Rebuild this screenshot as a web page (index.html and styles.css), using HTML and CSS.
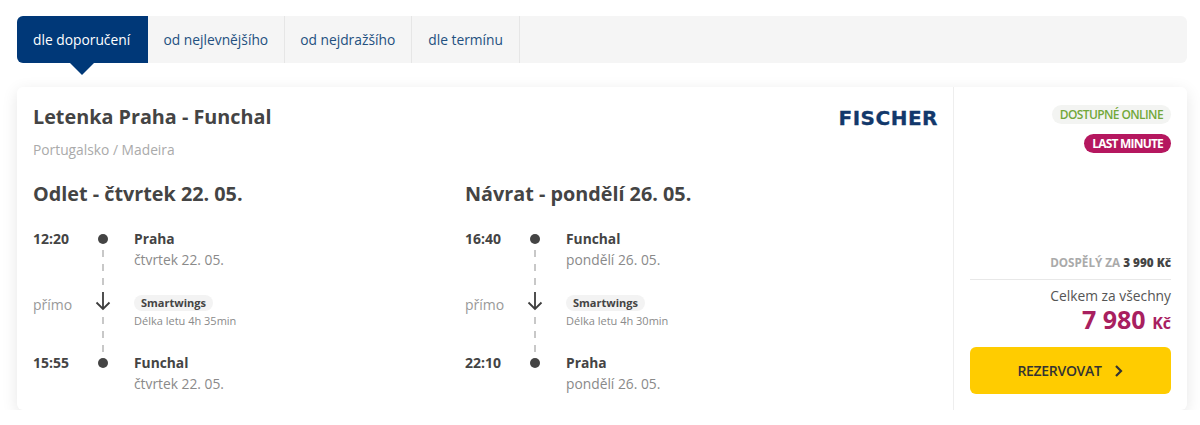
FILE: index.html

```html
<!DOCTYPE html>
<html lang="cs">
<head>
<meta charset="UTF-8">
<title>Letenka Praha - Funchal</title>
<link rel="stylesheet" href="styles.css">
</head>
<body>
<div class="tabs">
    <a class="tab active">dle doporučení</a>
    <a class="tab">od nejlevnějšího</a>
    <a class="tab">od nejdražšího</a>
    <a class="tab">dle termínu</a>
</div>

<div class="offer">
    <div class="offer-main">
        <div class="offer-head">
            <div>
                <h2 class="offer-title">Letenka Praha - Funchal</h2>
                <div class="offer-place">Portugalsko / Madeira</div>
            </div>
            <div class="logo">FISCHER</div>
        </div>
        <div class="legs">
            <div class="leg">
                <h3 class="leg-title">Odlet - čtvrtek 22. 05.</h3>
                <div class="route">
                    <div class="rail">
                        <span class="dot"></span>
                        <span class="dash"></span>
                        <svg class="arrow" viewBox="0 0 16 20" width="16" height="20"><path d="M8 1v17M1.500 11.500L8 18l6.500-6.500" fill="none" stroke="#3d3d3d" stroke-width="1.800"/></svg>
                        <span class="dash"></span>
                        <span class="dot"></span>
                    </div>
                    <div class="time">12:20</div>
                    <div class="stop"><b>Praha</b><span>čtvrtek 22. 05.</span></div>
                    <div class="direct">přímo</div>
                    <div class="flight"><span class="carrier">Smartwings</span><small>Délka letu 4h 35min</small></div>
                    <div class="time">15:55</div>
                    <div class="stop"><b>Funchal</b><span>čtvrtek 22. 05.</span></div>
                </div>
            </div>
            <div class="leg">
                <h3 class="leg-title">Návrat - pondělí 26. 05.</h3>
                <div class="route">
                    <div class="rail">
                        <span class="dot"></span>
                        <span class="dash"></span>
                        <svg class="arrow" viewBox="0 0 16 20" width="16" height="20"><path d="M8 1v17M1.500 11.500L8 18l6.500-6.500" fill="none" stroke="#3d3d3d" stroke-width="1.800"/></svg>
                        <span class="dash"></span>
                        <span class="dot"></span>
                    </div>
                    <div class="time">16:40</div>
                    <div class="stop"><b>Funchal</b><span>pondělí 26. 05.</span></div>
                    <div class="direct">přímo</div>
                    <div class="flight"><span class="carrier">Smartwings</span><small>Délka letu 4h 30min</small></div>
                    <div class="time">22:10</div>
                    <div class="stop"><b>Praha</b><span>pondělí 26. 05.</span></div>
                </div>
            </div>
        </div>
    </div>

    <div class="offer-side">
        <div class="badges">
            <span class="badge badge-online">DOSTUPNÉ ONLINE</span>
            <span class="badge badge-minute">LAST MINUTE</span>
        </div>
        <div class="price-box">
            <div class="per-person">DOSPĚLÝ ZA <b>3 990 Kč</b></div>
            <div class="total-label">Celkem za všechny</div>
            <div class="total">7 980 <small>Kč</small></div>
            <a class="btn-book">REZERVOVAT
                <svg viewBox="0 0 10 14" width="10" height="14"><path d="M2 2l5 5-5 5" fill="none" stroke="#333" stroke-width="2.200"/></svg>
            </a>
        </div>
    </div>
</div>
</body>
</html>
```

FILE: styles.css

```css
body {
    font-family: "Open Sans", Arial, sans-serif;
    background-color: #fff;
    color: #444;
    margin: 0;
    padding: 16px 13px 0 17px;
}
.tabs {
    display: flex;
    height: 47px;
    background-color: #f5f5f5;
    border-radius: 6px;
}
.tab {
    position: relative;
    display: flex;
    align-items: center;
    padding: 0 15.500px;
    font-size: 13.800px;
    color: #23507f;
    border-right: 1px solid #e6e6e6;
}
.tab:last-child {
    padding: 0 16.500px;
}
.tab.active {
    width: 99px;
    padding: 0 16px;
    background-color: #003878;
    color: #fff;
    border-right: none;
    border-radius: 6px 0 0 6px;
}
.tab.active::after {
    content: "";
    position: absolute;
    left: 53px;
    top: 100%;
    border-left: 12px solid transparent;
    border-right: 12px solid transparent;
    border-top: 12px solid #003878;
}
.offer {
    display: flex;
    height: 323px;
    margin-top: 24px;
    background-color: #fff;
    border-radius: 6px;
    box-shadow: 0 4px 16px rgba(0, 0, 0, 0.1);
}
.offer-main {
    flex: 1;
    padding: 16px 15px 0 16px;
}
.offer-head {
    display: flex;
    justify-content: space-between;
}
.offer-title {
    margin: 0;
    font-size: 19.800px;
    line-height: 28px;
    font-weight: 700;
}
.offer-place {
    margin-top: 9px;
    font-size: 13.800px;
    line-height: 20px;
    color: #aaa;
}
.logo {
    margin-top: 1px;
    font-family: "DejaVu Sans", Arial, sans-serif;
    font-size: 20px;
    line-height: 28px;
    font-weight: 700;
    color: #12386b;
    letter-spacing: 0.500px;
    -webkit-text-stroke: 0.300px #12386b;
}
.legs {
    display: flex;
    margin-top: 20px;
}
.leg {
    width: 432px;
}
.leg-title {
    margin: 0;
    font-size: 19.800px;
    line-height: 28px;
    font-weight: 700;
}
.route {
    display: grid;
    grid-template-columns: 57px 25px 1fr;
    grid-template-rows: 64px 60px 60px;
    margin-top: 21px;
    height: 184px;
}
.rail {
    grid-column: 2;
    grid-row: 1 / 4;
    display: flex;
    flex-direction: column;
    align-items: center;
    height: 134px;
    margin-top: 5px;
}
.dot {
    width: 10px;
    height: 10px;
    flex: none;
    border-radius: 50%;
    background-color: #444;
}
.dash {
    flex: 1;
    width: 2px;
    margin: 6px 0;
    background-image: repeating-linear-gradient(to bottom, #c8c8c8 0, #c8c8c8 7px, transparent 7px, transparent 14px);
}
.arrow {
    flex: none;
}
.time {
    grid-column: 1;
    font-size: 14px;
    line-height: 20px;
    font-weight: 700;
}
.stop, .flight {
    grid-column: 3;
    padding-left: 19px;
    display: flex;
    flex-direction: column;
    align-items: flex-start;
}
.stop b {
    font-size: 13.800px;
    line-height: 20px;
    font-weight: 700;
}
.stop span {
    font-size: 13.800px;
    line-height: 21px;
    color: #8a8a8a;
}
.direct {
    grid-column: 1;
    font-size: 14px;
    line-height: 20px;
    color: #999;
    padding-top: 2px;
}
.flight {
    padding-top: 2px;
}
.carrier {
    background-color: #f3f3f3;
    border-radius: 9px;
    padding: 0 7px;
    font-size: 11px;
    line-height: 16px;
    font-weight: 700;
}
.flight small {
    margin-top: 2px;
    font-size: 11px;
    line-height: 16px;
    color: #8a8a8a;
}
.offer-side {
    width: 201px;
    padding: 18px 16px 16px 16px;
    border-left: 1px solid #eee;
    display: flex;
    flex-direction: column;
    justify-content: space-between;
}
.badges {
    display: flex;
    flex-direction: column;
    align-items: flex-end;
    gap: 10px;
}
.badge {
    padding: 0 8px;
    border-radius: 10px;
    font-size: 12px;
    line-height: 19px;
    font-weight: 600;
    letter-spacing: -0.600px;
}
.badge-online {
    background-color: #f3f4f2;
    color: #72a83a;
}
.badge-minute {
    background-color: #b5175f;
    color: #fff;
    font-weight: 700;
    letter-spacing: -0.800px;
}
.per-person {
    padding-bottom: 9px;
    border-bottom: 1px solid #e8e8e8;
    text-align: right;
    font-size: 11.700px;
    line-height: 16px;
    font-weight: 700;
    color: #aaa;
}
.per-person b {
    color: #444;
}
.total-label {
    margin-top: 6px;
    text-align: right;
    font-size: 13.800px;
    line-height: 19px;
    color: #555;
}
.total {
    text-align: right;
    font-size: 25px;
    line-height: 28px;
    font-weight: 700;
    color: #a8205f;
}
.total small {
    font-size: 16px;
}
.btn-book {
    display: flex;
    align-items: center;
    justify-content: center;
    gap: 12px;
    height: 47px;
    margin-top: 10px;
    background-color: #ffcc00;
    border-radius: 6px;
    font-size: 14px;
    font-weight: 600;
    letter-spacing: -0.300px;
    color: #333;
}
```
